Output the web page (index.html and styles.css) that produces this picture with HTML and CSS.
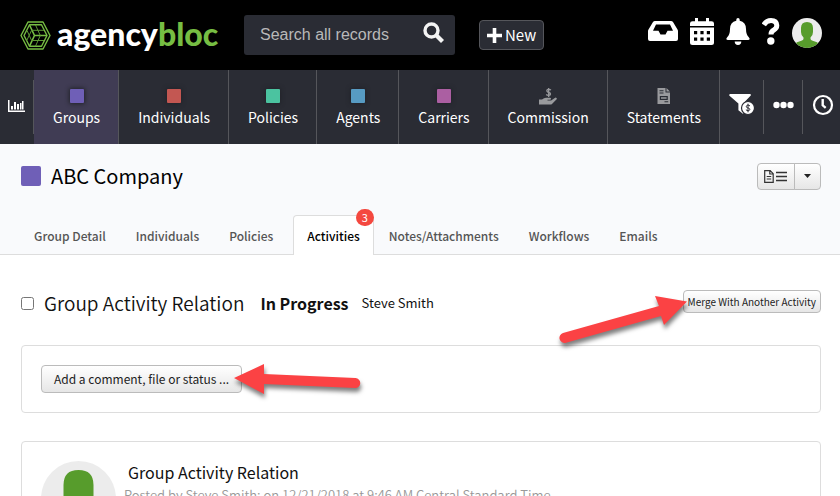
FILE: index.html
```html
<!DOCTYPE html>
<html lang="en">
<head>
<meta charset="utf-8">
<title>ABC Company - Activities</title>
<link rel="stylesheet" href="styles.css">
</head>
<body>
<header class="top">
  <a class="logo" href="#">
    <svg class="logo-mark" width="31" height="29" viewBox="0 0 31 29" fill="none" stroke="#76bd43" stroke-width="1.4" stroke-linejoin="round">
      <path d="M8 1h15l7 13.500-7 13.500H8L1 14.500z"/>
      <path d="M9.500 3.800h12l5.500 10.700-5.500 10.700h-12L4 14.500z"/>
      <path d="M9.500 4l5 10.500-5 10.700M14.500 14.500H27" stroke-width="1.600"/>
      <path d="M7 9.500l4.500 9.800M6.500 20l5-10.500M12 9.300h12M12 19.500h12M15.500 4l4.800 10.500-4.800 10.700" stroke-width="1" stroke="#5d9735"/>
    </svg>
    <span class="wordmark">agency<span class="wordmark-green">bloc</span></span>
  </a>
  <form class="search">
    <input class="search-input" type="text" placeholder="Search all records" aria-label="Search all records">
    <button class="search-button" type="button" aria-label="Search">
      <svg width="22" height="22" viewBox="0 0 22 22" fill="none" stroke="#f4f4f4"><circle cx="8.500" cy="8.500" r="6.500" stroke-width="3.400"/><path d="M13.500 13.500l6 6" stroke-width="4.200"/></svg>
    </button>
  </form>
  <button class="new-button" type="button">
    <svg width="15" height="15" viewBox="0 0 15 15"><path d="M5.700 0h3.600v5.700H15v3.600H9.300V15H5.700V9.300H0V5.700h5.700z" fill="#fff"/></svg>
    New
  </button>
  <div class="tools">
    <a class="tool" href="#" aria-label="Inbox"><svg width="30" height="24" viewBox="0 -3 30 24"><path fill="#fff" fill-rule="evenodd" d="M7 0h16q1.300 0 2 1l4.500 7.500q.5.800.5 1.800V18q0 2-2 2H2q-2 0-2-2V10.300q0-1 .5-1.800L5 1q.7-1 2-1zM8 3.500L5 9.800h5.500L12.500 13.500h5L19.500 9.800H25L22 3.500z"/></svg></a>
    <a class="tool" href="#" aria-label="Calendar"><svg width="24" height="27" viewBox="0 0 24 27" fill="#fff"><path d="M5 0h3v3.200h8V0h3v3.200h2.500Q24 3.200 24 5.500V8H0V5.500Q0 3.200 2.500 3.200H5z"/><path fill-rule="evenodd" d="M0 9.500h24v15q0 2.500-2.500 2.500h-19Q0 27 0 24.500zM4 13v3.200h3.200V13zm6.400 0v3.200h3.200V13zm6.400 0v3.200H20V13zM4 19.500v3.200h3.200v-3.200zm6.400 0v3.200h3.200v-3.200zm6.400 0v3.200H20v-3.200z"/></svg></a>
    <a class="tool" href="#" aria-label="Notifications"><svg width="24" height="27" viewBox="0 0 24 27" fill="#fff"><path d="M12 0q1.700 0 1.700 1.700v1q6.300 1.300 6.300 8.300 0 5.500 2.800 8.200 1.200 1.300.8 2-.3.800-1.500.8H1.900q-1.200 0-1.500-.8-.4-.7.800-2Q4 16.500 4 11q0-7 6.300-8.300v-1Q10.300 0 12 0zM8.700 23.600h6.600Q15.300 27 12 27t-3.300-3.400z"/></svg></a>
    <a class="tool" href="#" aria-label="Help"><svg width="18" height="27" viewBox="1 0 18 27"><path d="M2.800 6.800Q5.500 2.600 10 2.600q5.500 0 5.800 4.900 0 2.800-3 4.500-2.800 1.500-2.800 4.500" fill="none" stroke="#fff" stroke-width="5"/><circle cx="9.800" cy="23" r="3.700" fill="#fff"/></svg></a>
    <a class="tool" href="#" aria-label="Account"><svg width="30" height="30" viewBox="0 0 30 30"><clipPath id="account-clip"><circle cx="15" cy="15" r="15"/></clipPath><g clip-path="url(#account-clip)"><path fill="#ececec" d="M0 0h30v30H0z"/><path fill="#579c2c" d="M15 4q6 0 6 6v4q0 3.500-2.500 5.500v1.300q0 1.200 1.500 1.700l5 1.800q2 .8 2 5.700H3q0-4.900 2-5.700l5-1.800q1.500-.5 1.500-1.700v-1.300Q9 17.500 9 14v-4q0-6 6-6z"/></g></svg></a>
  </div>
</header>

<nav class="nav">
  <a class="nav-mini nav-chart" href="#" aria-label="Dashboard"><svg width="17" height="14" viewBox="0 0 17 14" fill="#fff"><path d="M0 1h1.500v10.500H17V13H0zM3 7h2v3.500H3zM6 3h2v7.500H6zM9 5h2v5.500H9zM12 4h1.500v6.500H12zM14 2h1.500v8.500H14z"/></svg></a>
  <a class="nav-item nav-active" href="#"><span class="swatch purple"></span>Groups</a>
  <a class="nav-item" href="#"><span class="swatch red"></span>Individuals</a>
  <a class="nav-item" href="#"><span class="swatch green"></span>Policies</a>
  <a class="nav-item" href="#"><span class="swatch blue"></span>Agents</a>
  <a class="nav-item" href="#"><span class="swatch pink"></span>Carriers</a>
  <a class="nav-item" href="#"><svg class="nav-icon" width="18" height="17" viewBox="0 0 18 17" fill="#999a9d"><path d="M0 11.500h3q2-1.700 4-1.700h4q1 0 1 1t-1 1H8.500v.8h3.600l3.700-2.700q1-.6 1.700.1t-.1 1.500L13 16q-.7.500-1.500.5H0z"/><path d="M12 2q-1.500-1-3-.6T8 3.200q.3.800 1.700 1.100 1.800.4 1.800 1.600T9.800 7.400Q8.300 7.500 7.200 6.500M9.700 0v9" fill="none" stroke="#999a9d" stroke-width="1.300"/></svg>Commission</a>
  <a class="nav-item" href="#"><svg class="nav-icon" width="14" height="17" viewBox="0 0 14 17"><path fill="#999a9d" fill-rule="evenodd" d="M.5 0h8v4.500H13V16H.5zM9.500 0L13 3.500H9.500zM2.500 2.300v1h4v-1zm0 2.200v1h4v-1zm.3 3.500v4h8V8zM4 9.200h5.600v1.600H4zM7.500 13.300v1h3.700v-1z"/></svg>Statements</a>
  <a class="nav-mini" href="#" aria-label="Commission filter"><svg width="26" height="22" viewBox="0 0 26 22"><path fill="#fff" d="M1 0h20q1.500.5.500 1.800l-7.300 7.700V20l-4.800-3.700V9.500L.5 1.800Q-.3.500 1 0z"/><circle cx="19" cy="14" r="6.500" fill="#fff" stroke="#2a2b33" stroke-width="1.200"/><path d="M21 12q-1-1-2.300-.8t-1.400 1.200.9 1.300l1.600.5q1.300.5 1 1.500t-1.600 1-2.300-1M19 9.700v8.600" fill="none" stroke="#2a2b33" stroke-width="1"/></svg></a>
  <a class="nav-mini" href="#" aria-label="More"><svg width="21" height="8" viewBox="0 0 21 8" fill="#fff"><circle cx="3.500" cy="4" r="3.200"/><circle cx="10.500" cy="4" r="3.200"/><circle cx="17.500" cy="4" r="3.200"/></svg></a>
  <a class="nav-mini nav-last" href="#" aria-label="Recent"><svg width="22" height="22" viewBox="0 0 22 22" fill="none" stroke="#fff"><circle cx="11" cy="11" r="9" stroke-width="2.200"/><path d="M10.700 5v6.300l3 2.500" stroke-width="2.400"/></svg></a>
</nav>

<section class="record">
  <div class="record-head">
    <span class="record-swatch"></span>
    <h1 class="record-title">ABC Company</h1>
    <div class="button-group">
      <button class="btn group-main" type="button" aria-label="Record view"><svg width="24" height="13" viewBox="0 0 24 13" fill="none" stroke="#333"><path d="M.7.700h5.500l3 3v8.600H.7zM5.800.700v3.300h3.400M2.700 6.500h4.500M2.700 9h4.500" stroke-width="1.200"/><path d="M12 2.500h11M12 6.500h11M12 10.500h11" stroke-width="1.600"/></svg></button>
      <button class="btn group-drop" type="button" aria-label="More options"><svg width="7" height="4" viewBox="0 0 7 4"><path d="M0 0h7L3.500 4z" fill="#222"/></svg></button>
    </div>
  </div>
  <div class="tabs">
    <a class="tab" href="#">Group Detail</a>
    <a class="tab" href="#">Individuals</a>
    <a class="tab" href="#">Policies</a>
    <a class="tab tab-active" href="#">Activities<span class="badge">3</span></a>
    <a class="tab" href="#">Notes/Attachments</a>
    <a class="tab" href="#">Workflows</a>
    <a class="tab" href="#">Emails</a>
  </div>
</section>

<main class="content">
  <div class="activity">
    <input class="activity-check" type="checkbox" id="activity-check">
    <label class="activity-name" for="activity-check">Group Activity Relation</label>
    <strong class="activity-status">In Progress</strong>
    <span class="activity-owner">Steve Smith</span>
    <div class="merge">
      <button class="btn merge-button" type="button">Merge With Another Activity</button>
      <svg class="arrow arrow-merge" width="134" height="64" viewBox="0 0 134 64"><path fill="#fb4244" d="M5 40L101 13 97 3 129 8.500 106 32 103 23 8 49.700A5 5 0 0 1 5 40z"/></svg>
    </div>
  </div>
  <div class="card">
    <div class="comment">
      <button class="btn comment-button" type="button">Add a comment, file or status ...</button>
      <svg class="arrow arrow-comment" width="132" height="40" viewBox="0 0 132 40"><path fill="#fb4244" d="M2 17L32 3v10l91.500 4a5 5 0 0 1-.5 10L32 23v10z"/></svg>
    </div>
  </div>
  <article class="card post">
    <svg class="avatar" width="75" height="75" viewBox="0 0 75 75"><clipPath id="avatar-clip"><circle cx="37.500" cy="37.500" r="37.500"/></clipPath><g clip-path="url(#avatar-clip)"><path fill="#ececec" d="M0 0h75v75H0z"/><path fill="#579c2c" d="M37.500 9q15 0 15 15v11q0 9-6 14v3q0 3 4 4l12 5q5 2 5 14h-60q0-12 5-14l12-5q4-1 4-4v-3q-6-5-6-14V24q0-15 15-15z"/></g></svg>
    <div class="post-text">
      <h2 class="post-title">Group Activity Relation</h2>
      <p class="post-meta">Posted by Steve Smith: on 12/21/2018 at 9:46 AM Central Standard Time</p>
    </div>
  </article>
</main>
</body>
</html>
```
FILE: styles.css
```css
* { box-sizing: border-box; }

html { overflow: hidden; }

body {
  margin: 0;
  height: 100vh;
  overflow: hidden;
  background: #fff;
  color: #111;
  font-family: "Noto Sans CJK SC", "Noto Sans", sans-serif;
  font-size: 16px;
}

a { color: inherit; text-decoration: none; }

button, input { font-family: inherit; }

svg { display: block; flex: none; }

.top {
  display: flex;
  align-items: center;
  height: 70px;
  padding: 0 18px 0 20px;
  background: #000;
}

.logo {
  display: flex;
  align-items: center;
  gap: 6px;
  width: 224px;
}

.wordmark {
  color: #fff;
  font: 900 32px/40px Lato, sans-serif;
  padding-bottom: 2px;
}

.wordmark-green { color: #76bd43; }

.search {
  display: flex;
  align-items: center;
  width: 211px;
  height: 40px;
  padding: 0 10px 0 16px;
  border-radius: 3px;
  background: #2a2c34;
}

.search-input {
  flex: 1;
  min-width: 0;
  padding: 0;
  border: 0;
  outline: 0;
  background: transparent;
  color: #fff;
  font: 16px/24px "Liberation Sans", Arial, sans-serif;
}

.search-input::placeholder { color: #b9b9b9; opacity: 1; }

.search-button {
  padding: 0;
  border: 0;
  background: transparent;
  margin-bottom: 4px;
}

.new-button {
  display: flex;
  align-items: center;
  gap: 3px;
  height: 30px;
  margin-left: 24px;
  padding: 0 7px;
  border: 1px solid #55565b;
  border-radius: 4px;
  background: #2a2c34;
  color: #fff;
  font-size: 15px;
  line-height: 20px;
}

.tools {
  display: flex;
  align-items: flex-start;
  gap: 12px;
  margin-left: auto;
  padding-bottom: 4px;
}

.nav {
  display: flex;
  height: 74px;
  background: #2a2c34;
  color: #fff;
}

.nav-item {
  display: flex;
  flex-direction: column;
  align-items: center;
  padding: 19px 18px 0 19px;
  border-right: 1px solid #55565b;
  font-size: 14px;
  line-height: 24px;
  white-space: nowrap;
}

.nav-active { background: #403c54; }

.nav-icon { margin: -1px 0 0; }

.swatch {
  width: 14px;
  height: 14px;
  margin: 0 0 2px;
  border-radius: 1px;
  box-shadow: 0 0 4px 1px #22232a;
}

.purple { background: #6f5fb7; }
.red { background: #c35752; }
.green { background: #4bc3a0; }
.blue { background: #579bc3; }
.pink { background: #ab5fa2; }

.nav-mini {
  display: flex;
  flex: 1 0 auto;
  align-items: center;
  justify-content: center;
  margin: 10px 0;
  padding: 0 8px 4px;
  border-right: 1px solid #55565b;
}

.nav-chart {
  flex: none;
  padding-bottom: 2px;
}

.nav-last {
  border-right: 0;
  padding-right: 6px;
}

.record {
  border-bottom: 1px solid #ddd;
  background: #f9fafc;
}

.record-head {
  display: flex;
  align-items: center;
  padding: 16px 19px 0 21px;
}

.record-swatch {
  width: 20px;
  height: 20px;
  border-radius: 2px;
  background: #6f5fb7;
}

.record-title {
  margin: 0 auto 0 10px;
  color: #000;
  font-size: 20px;
  font-weight: 400;
  line-height: 32px;
}

.btn {
  border: 1px solid #bbb;
  border-radius: 4px;
  background: linear-gradient(#fff, #e6e6e6);
  color: #222;
}

.button-group { display: flex; }

.group-main {
  height: 27px;
  padding: 0 6px;
  border-radius: 4px 0 0 4px;
}

.group-drop {
  height: 27px;
  margin-left: -1px;
  padding: 0 9px;
  border-radius: 0 4px 4px 0;
}

.tabs {
  display: flex;
  margin: 23px 0 -1px;
  padding-left: 19px;
}

.tab {
  position: relative;
  height: 40px;
  padding: 0 14px;
  border: 1px solid transparent;
  border-bottom: 0;
  color: #555;
  font-size: 12px;
  font-weight: 500;
  line-height: 40px;
  white-space: nowrap;
}

.tab-active {
  margin-left: 5px;
  padding: 0 13px;
  border-color: #ddd;
  border-radius: 4px 4px 0 0;
  background: #fff;
  color: #000;
}

.badge {
  position: absolute;
  top: -7px;
  right: -1px;
  width: 18px;
  height: 17px;
  border-radius: 9px;
  background: #f4483f;
  color: #fff;
  font-size: 11px;
  font-weight: 400;
  line-height: 16px;
  text-align: center;
}

.content { padding: 32px 19px 0 21px; }

.activity {
  display: flex;
  align-items: center;
  height: 32px;
}

.activity-check {
  width: 13px;
  height: 13px;
  margin: 0;
}

.activity-name {
  margin-left: 10px;
  font-size: 19px;
  font-weight: 350;
  line-height: 32px;
}

.activity-status {
  margin-left: 16px;
  font-size: 16px;
  line-height: 32px;
}

.activity-owner {
  margin-left: 13px;
  font-size: 13px;
  line-height: 32px;
}

.merge {
  position: relative;
  margin-left: auto;
  margin-bottom: 3px;
}

.merge-button {
  display: block;
  height: 23px;
  padding: 0 4px;
  font-size: 10px;
  line-height: 20px;
}

.card {
  margin-top: 26px;
  padding: 19px;
  border: 1px solid #ddd;
  border-radius: 4px;
}

.card + .card { margin-top: 28px; }

.comment {
  position: relative;
  width: max-content;
}

.comment-button {
  display: block;
  height: 28px;
  padding: 0 12px;
  font-size: 12px;
  line-height: 20px;
}

.arrow {
  position: absolute;
  overflow: visible;
  filter: drop-shadow(1px 4px 2px rgba(0, 0, 0, 0.5));
  pointer-events: none;
}

.arrow-merge { top: 3px; right: 129px; }

.arrow-comment { top: -4px; left: 191px; }

.post {
  display: flex;
  gap: 8px;
}

.post-title {
  margin: 0 0 0 4px;
  font-size: 16px;
  font-weight: 400;
  line-height: 22px;
}

.post-meta {
  margin: 0;
  color: #999;
  font-size: 13px;
  font-weight: 350;
  line-height: 24px;
}
```
